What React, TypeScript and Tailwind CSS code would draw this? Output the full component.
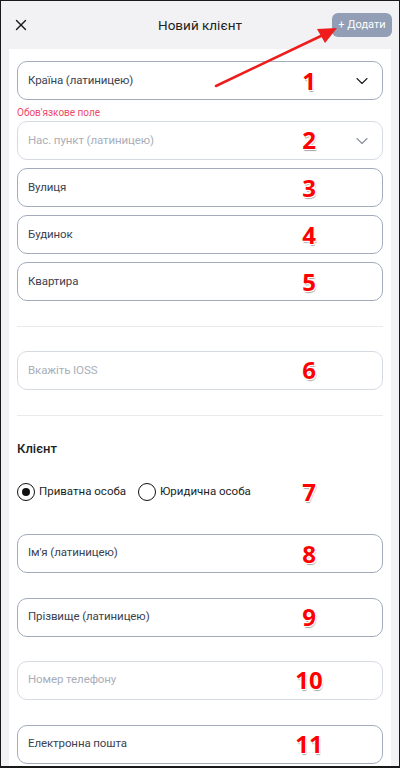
import React from "react";
import { ChevronDown, X } from "lucide-react";

const Num = ({ n, top }: { n: string; top: number }) => (
  <span
    className="absolute left-[308px] -translate-x-1/2 text-[24px] font-bold leading-none text-[#ff0000]"
    style={{
      top,
      fontFamily: "'Open Sans', sans-serif",
      textShadow:
        "1px 1px 0 #fff, -1px -1px 0 #fff, 1px -1px 0 #fff, -1px 1px 0 #fff, 1px 2px 1px rgba(0,0,0,0.35)",
    }}
  >
    {n}
  </span>
);

const Field = ({
  label,
  muted,
  chevron,
  className = "",
}: {
  label: string;
  muted?: boolean;
  chevron?: boolean;
  className?: string;
}) => (
  <div
    className={`flex h-[39px] items-center justify-between rounded-[10px] border bg-white pl-[10px] pr-[10px] ${
      muted ? "border-[#d6dae2]" : "border-[#a3acbd]"
    } ${className}`}
  >
    <span className={`text-[11.5px] tracking-[-0.1px] ${muted ? "text-[#a9aeb8]" : "text-[#3c4250]"}`}>{label}</span>
    {chevron && (
      <ChevronDown
        size={20}
        strokeWidth={1.4}
        className={muted ? "text-[#8d93a0]" : "text-[#1f2329]"}
      />
    )}
  </div>
);

const Radio = ({ checked, label }: { checked?: boolean; label: string }) => (
  <div className="flex items-center gap-[4px]">
    <span className="flex h-[18px] w-[18px] items-center justify-center rounded-full border-[1.5px] border-[#111]">
      {checked && <span className="h-[8px] w-[8px] rounded-full bg-[#111]" />}
    </span>
    <span className="text-[11.5px] text-[#1c1f24]">{label}</span>
  </div>
);

export default function App() {
  return (
    <div
      className="relative h-[768px] w-[400px] overflow-hidden border border-b-2 border-[#1a1a1a] bg-[#f2f2f4]"
      style={{ fontFamily: "Roboto, 'Noto Sans', sans-serif" }}
    >
      <div className="flex h-[48px] items-center justify-between pl-[11px] pr-[7px]">
        <X size={18} strokeWidth={1.8} className="text-[#1b1b1b]" />
        <span className="absolute left-1/2 top-[14px] -translate-x-1/2 text-[13.5px] text-[#222]">
          Новий клієнт
        </span>
        <button className="flex h-[24px] w-[60px] items-center justify-center rounded-[6px] bg-[#919eb5] text-[11px] text-white">
          + Додати
        </button>
      </div>
      <div className="mx-[8px] flex min-h-[720px] flex-col bg-white px-[8px] pt-[12px]">
        <Field label="Країна (латиницею)" chevron />
        <span className="mt-[4px] h-[17px] text-[10px] leading-[17px] text-[#f04a6a]">Обов'язкове поле</span>
        <Field label="Нас. пункт (латиницею)" chevron muted />
        <Field label="Вулиця" className="mt-[8px]" />
        <Field label="Будинок" className="mt-[8px]" />
        <Field label="Квартира" className="mt-[8px]" />
        <div className="mt-[25px] h-px bg-[#e9eaed]" />
        <Field label="Вкажіть IOSS" muted className="mt-[24px]" />
        <div className="mt-[25px] h-px bg-[#e9eaed]" />
        <div className="mt-[23px] text-[13px] font-medium text-[#1c1f24]">Клієнт</div>
        <div className="mt-[24px] flex items-center gap-[12px]">
          <Radio checked label="Приватна особа" />
          <Radio label="Юридична особа" />
        </div>
        <Field label="Ім'я (латиницею)" className="mt-[33px]" />
        <Field label="Прізвище (латиницею)" className="mt-[25px]" />
        <Field label="Номер телефону" muted className="mt-[24px]" />
        <Field label="Електронна пошта" className="mt-[25px]" />
      </div>

      <svg className="absolute left-0 top-0" width="400" height="120" viewBox="0 0 400 120">
        <line x1="215" y1="85" x2="322" y2="34" stroke="#ee1c1c" strokeWidth="2.5" strokeLinecap="round" />
        <polygon points="336,27 316,28 324,42" fill="#ee1c1c" />
      </svg>

      <Num n="1" top={68} />
      <Num n="2" top={127} />
      <Num n="3" top={175} />
      <Num n="4" top={222} />
      <Num n="5" top={269} />
      <Num n="6" top={357} />
      <Num n="7" top={479} />
      <Num n="8" top={541} />
      <Num n="9" top={604} />
      <Num n="10" top={667} />
      <Num n="11" top={731} />
    </div>
  );
}
